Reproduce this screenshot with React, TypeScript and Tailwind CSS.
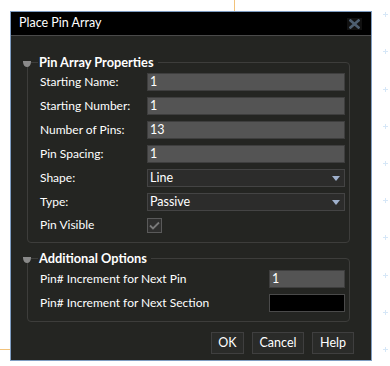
import React from "react";

const font = { fontFamily: 'Lato, "Noto Sans", sans-serif' };

function Collapse() {
  return (
    <svg width="8" height="6" viewBox="0 0 8 6" className="absolute left-[-5px] top-[-2px]">
      <path d="M0 0 H8 V1 C8 4 6 6 4 6 C2 6 0 4 0 1 Z" fill="#8a8a8a" />
    </svg>
  );
}

function Arrow() {
  return (
    <svg width="8" height="5" viewBox="0 0 8 5" className="mr-[4px]">
      <path d="M0 0 H8 L4 5 Z" fill="#9fb0cc" />
    </svg>
  );
}

function TextInput({ value }: { value: string }) {
  return (
    <div className="h-[18px] w-[198px] bg-[#545454] border border-[#3e3e3e] flex items-center pl-[2px] text-[12.5px] text-white leading-none">
      {value}
    </div>
  );
}

function Select({ value }: { value: string }) {
  return (
    <div className="h-[18px] w-[198px] bg-[#2c2c2b] border border-[#444] flex items-center justify-between pl-[2px] text-[12.5px] text-white leading-none">
      <span>{value}</span>
      <Arrow />
    </div>
  );
}

function Row({ label, children }: { label: string; children: React.ReactNode }) {
  return (
    <div className="flex items-center h-[18px]">
      <div className="w-[107px] text-[12px] text-white leading-none">{label}</div>
      {children}
    </div>
  );
}

export default function App() {
  const plusYs = [14, 51, 89, 126, 163, 200, 237, 275, 312, 349];
  return (
    <div className="relative w-[390px] h-[366px] bg-white overflow-hidden" style={font}>
      <div className="absolute left-[234px] top-0 w-[1px] h-[12px] bg-[#f2c27a]" />
      <div className="absolute left-0 top-[349px] w-[10px] h-[1px] bg-[#f2c27a]" />
      {plusYs.map((y) => (
        <div key={y} className="absolute left-[383px] w-[5px] h-[5px]" style={{ top: y - 2 }}>
          <div className="absolute left-[2px] top-0 w-[1px] h-[5px] bg-[#d6e7f7]" />
          <div className="absolute left-0 top-[2px] w-[5px] h-[1px] bg-[#d6e7f7]" />
        </div>
      ))}
      <div className="absolute left-[10px] top-[11px] w-[362px] h-[350px] border border-[#7f9dc2] bg-[#242522] flex flex-col">
        <div className="h-[24px] bg-black border-b border-[#4a4a4a] flex items-center justify-between pl-[8px] pr-[9px]">
          <span className="text-[12.5px] text-white leading-none">Place Pin Array</span>
          <div className="w-[15px] h-[12px] bg-[#111] flex items-center justify-center">
            <svg width="11" height="10" viewBox="0 0 11 10">
              <path d="M1.5 1.5 L9.5 8.5 M9.5 1.5 L1.5 8.5" stroke="#4d5e70" strokeWidth="2.6" strokeLinecap="square" />
            </svg>
          </div>
        </div>
        <div className="flex flex-col pl-[16px] pr-[21px] pt-[26px]">
          <div className="relative border border-[#3d3d3b] rounded-[4px] pl-[12px] pr-[4px] pt-[10px] pb-[9px]">
            <Collapse />
            <div className="absolute left-[10px] top-[-9px] bg-[#242522] pl-[1px] pr-[4px] text-[12.8px] font-bold text-white leading-[17px]">
              Pin Array Properties
            </div>
            <div className="flex flex-col gap-[6px]">
              <Row label="Starting Name:"><TextInput value="1" /></Row>
              <Row label="Starting Number:"><TextInput value="1" /></Row>
              <Row label="Number of Pins:"><TextInput value="13" /></Row>
              <Row label="Pin Spacing:"><TextInput value="1" /></Row>
              <Row label="Shape:"><Select value="Line" /></Row>
              <Row label="Type:"><Select value="Passive" /></Row>
              <div className="flex items-center h-[16px]">
                <div className="w-[107px] text-[12px] text-white leading-none">Pin Visible</div>
                <div className="w-[15px] h-[15px] border border-[#5a5a5a] bg-[#2f2f2e] flex items-center justify-center">
                  <svg width="11" height="9" viewBox="0 0 11 9">
                    <path d="M1 4.5 L4 7.5 L10 1.5" stroke="#7a7a7a" strokeWidth="1.8" fill="none" />
                  </svg>
                </div>
              </div>
            </div>
          </div>
          <div className="relative mt-[15px] border border-[#3d3d3b] rounded-[4px] pl-[12px] pr-[4px] pt-[11px] pb-[9px]">
            <Collapse />
            <div className="absolute left-[10px] top-[-9px] bg-[#242522] pl-[1px] pr-[4px] text-[12.8px] font-bold text-white leading-[17px]">
              Additional Options
            </div>
            <div className="flex flex-col gap-[6px]">
              <div className="flex items-center justify-between h-[18px]">
                <span className="text-[12px] text-white leading-none">Pin# Increment for Next Pin</span>
                <div className="h-[18px] w-[76px] bg-[#545454] border border-[#3e3e3e] flex items-center pl-[2px] text-[12.5px] text-white leading-none">1</div>
              </div>
              <div className="flex items-center justify-between h-[18px]">
                <span className="text-[12px] text-white leading-none">Pin# Increment for Next Section</span>
                <div className="h-[18px] w-[76px] bg-black border border-[#4a4a4a]" />
              </div>
            </div>
          </div>
          <div className="flex justify-end gap-[8px] mt-[10px] mr-[-4px]">
            <button className="h-[22px] w-[33px] bg-[#2a2b29] border border-[#3f3f3f] text-[12.5px] text-white leading-none">OK</button>
            <button className="h-[22px] w-[52px] bg-[#2a2b29] border border-[#3f3f3f] text-[12.5px] text-white leading-none">Cancel</button>
            <button className="h-[22px] w-[42px] bg-[#2a2b29] border border-[#3f3f3f] text-[12.5px] text-white leading-none">Help</button>
          </div>
        </div>
      </div>
    </div>
  );
}
